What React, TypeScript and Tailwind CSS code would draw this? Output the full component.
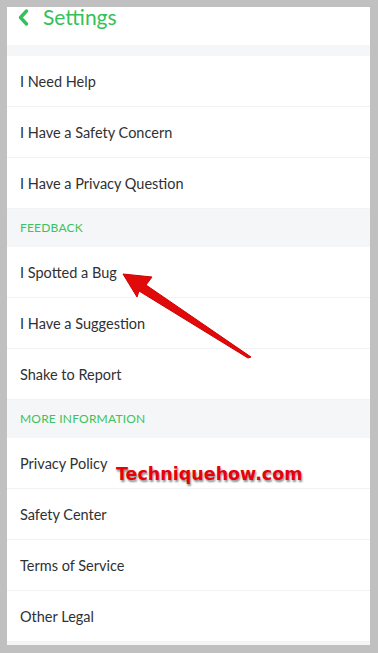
import React from 'react'

type Row = { kind: 'item'; label: string } | { kind: 'section'; label: string }

const ROWS: Row[] = [
  { kind: 'item', label: 'I Need Help' },
  { kind: 'item', label: 'I Have a Safety Concern' },
  { kind: 'item', label: 'I Have a Privacy Question' },
  { kind: 'section', label: 'FEEDBACK' },
  { kind: 'item', label: 'I Spotted a Bug' },
  { kind: 'item', label: 'I Have a Suggestion' },
  { kind: 'item', label: 'Shake to Report' },
  { kind: 'section', label: 'MORE INFORMATION' },
  { kind: 'item', label: 'Privacy Policy' },
  { kind: 'item', label: 'Safety Center' },
  { kind: 'item', label: 'Terms of Service' },
  { kind: 'item', label: 'Other Legal' },
]

export default function App() {
  return (
    <div className="relative h-[653px] w-[378px] overflow-hidden bg-[#c0c0c0] pl-[7px] pr-[8px] pt-[7px] pb-[8px] font-['Lato','Noto_Sans',sans-serif]">
      <div className="flex h-full flex-col bg-white">
        <div className="flex h-[38px] items-start gap-[12px] pl-[10px]">
          <svg width="14" height="20" viewBox="0 0 14 20" className="mt-[1px]">
            <path d="M9.5 3 L3.5 9.5 L9.5 16" fill="none" stroke="#33c15a" strokeWidth="3.4" strokeLinecap="round" strokeLinejoin="round" />
          </svg>
          <span className="-mt-[3px] text-[21px] leading-[26px] text-[#33c15a]">Settings</span>
        </div>
        <div className="h-[11px] bg-[#f5f6f8]" />
        {ROWS.map((r, i) =>
          r.kind === 'section' ? (
            <div key={i} className="flex h-[38px] items-center bg-[#f5f6f8] pl-[13px] text-[12px] tracking-[0.2px] text-[#3cc260]">
              {r.label}
            </div>
          ) : (
            <div key={i} className="flex h-[51px] items-center border-b border-[#f1f2f4] pl-[13px] pt-[2px] text-[14.5px] text-[#2f3133]">
              {r.label}
            </div>
          ),
        )}
        <div className="flex-1 bg-[#f5f6f8]" />
      </div>

      <svg className="pointer-events-none absolute left-0 top-0" width="378" height="653">
        <polygon
          points="123,274 152,277 146,285 251,357 248,358 139,291 137,297"
          fill="#e10a0a"
          stroke="#d00000"
          strokeWidth="1"
          strokeLinejoin="round"
        />
      </svg>

      <div className="pointer-events-none absolute left-[116px] top-[462px] font-['DejaVu_Sans',sans-serif] text-[17.5px] font-bold leading-[24px] text-[#e8000b] [paint-order:stroke_fill] [-webkit-text-stroke:3px_#ffffff] [text-shadow:1px_2px_2px_rgba(0,0,0,0.45)]">
        Techniquehow.com
      </div>
    </div>
  )
}
